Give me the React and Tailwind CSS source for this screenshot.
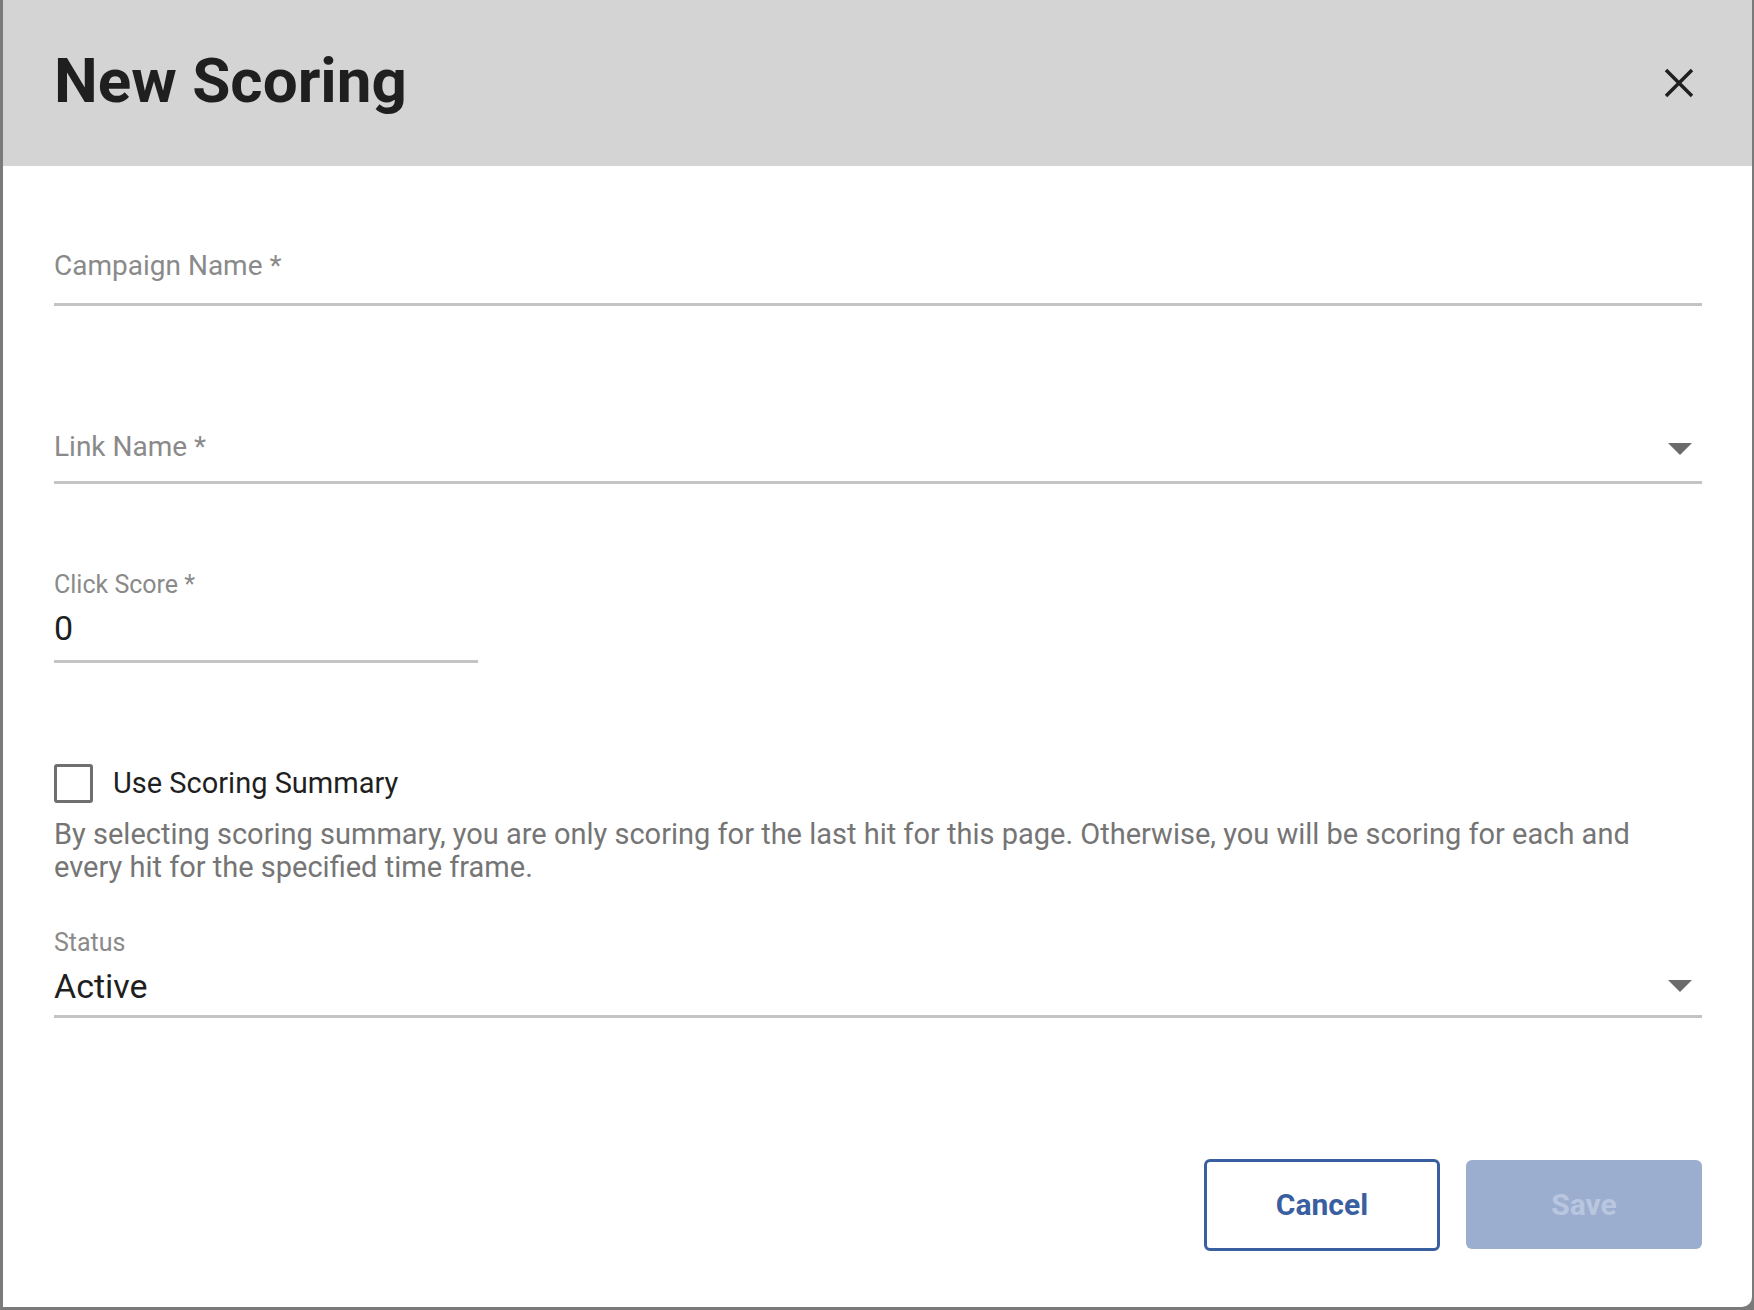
export default function App() {
  const Tri = () => (
    <svg width="24" height="12" viewBox="0 0 24 12"><path d="M0 0 L24 0 L12 12 Z" fill="#6b6b6b" /></svg>
  );
  return (
    <div className="w-[1754px] h-[1310px] bg-[#7a7a7a] pl-[3px] pb-[3px] pr-[2px]" style={{ fontFamily: "Roboto, 'Liberation Sans', sans-serif" }}>
      <div className="h-full bg-white rounded-br-[10px] flex flex-col overflow-hidden">
        <div className="h-[166px] bg-[#d4d4d4] flex items-center justify-between pl-[51px] pr-[58px] shrink-0">
          <h1 className="text-[62px] font-bold text-[#1f1f1f] leading-none pb-[4px]">New Scoring</h1>
          <svg width="30" height="30" viewBox="0 0 30 30" stroke="#1f1f1f" strokeWidth="3.5"><path d="M2 2 L28 28 M28 2 L2 28" /></svg>
        </div>
        <div className="flex flex-col pl-[51px] pr-[50px] flex-1">
          <div className="mt-[86px] border-b-[3px] border-[#c4c4c4] h-[54px] flex items-start">
            <span className="text-[28px] text-[#8a8a8a] leading-none">Campaign Name *</span>
          </div>
          <div className="mt-[127px] border-b-[3px] border-[#c4c4c4] h-[51px] flex items-start justify-between pr-[10px]">
            <span className="text-[28px] text-[#8a8a8a] leading-none">Link Name *</span>
            <div className="mt-[10px]"><Tri /></div>
          </div>
          <div className="mt-[88px] w-[424px] border-b-[3px] border-[#c4c4c4] flex flex-col">
            <span className="text-[25px] text-[#8a8a8a] leading-none">Click Score *</span>
            <span className="text-[34px] text-[#1f1f1f] leading-none mt-[14px] mb-[15px]">0</span>
          </div>
          <div className="mt-[99px] flex items-center gap-[20px]">
            <div className="w-[39px] h-[39px] border-[3px] border-[#6f6f6f] rounded-[3px]" />
            <span className="text-[29px] text-[#1f1f1f]">Use Scoring Summary</span>
          </div>
          <p className="mt-[12px] text-[29px] leading-[33px] text-[#757575]">By selecting scoring summary, you are only scoring for the last hit for this page. Otherwise, you will be scoring for each and every hit for the specified time frame.</p>
          <div className="mt-[46px] border-b-[3px] border-[#c4c4c4] flex flex-col">
            <span className="text-[25px] text-[#8a8a8a] leading-none">Status</span>
            <div className="flex items-center justify-between pr-[10px] mt-[14px] mb-[12px]">
              <span className="text-[34px] text-[#1f1f1f] leading-none">Active</span>
              <Tri />
            </div>
          </div>
          <div className="mt-[141px] flex justify-end gap-[26px]">
            <button className="w-[236px] h-[92px] border-[3px] border-[#3a5fa0] rounded-[6px] text-[30px] font-bold text-[#3a5fa0]">Cancel</button>
            <button className="w-[236px] h-[89px] mt-[1px] bg-[#9caecf] rounded-[6px] text-[30px] font-bold text-[#b9c6df]">Save</button>
          </div>
        </div>
      </div>
    </div>
  );
}
